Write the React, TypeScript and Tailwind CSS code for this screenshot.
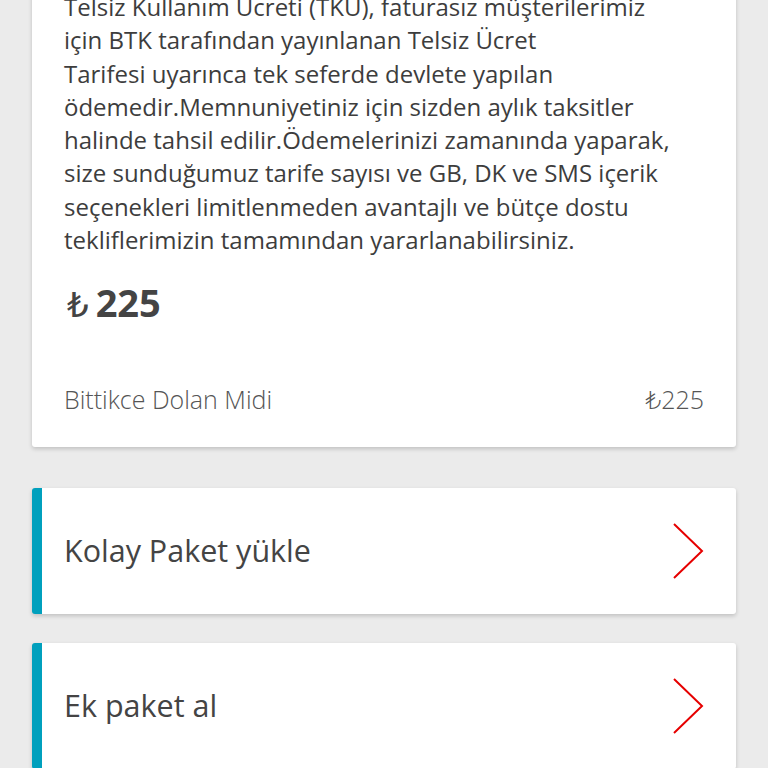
const font = { fontFamily: '"Open Sans", "DejaVu Sans", sans-serif' };

function Chevron() {
  return (
    <svg width="32" height="56" viewBox="0 0 32 56" fill="none" className="shrink-0">
      <path d="M2 1 L30 28 L2 55" stroke="#e60000" strokeWidth="2" />
    </svg>
  );
}

function LinkCard({ label }: { label: string }) {
  return (
    <div className="flex h-[126px] items-center rounded-[3px] bg-white border-l-[10px] border-[#00a0bd] pl-[22px] pr-[32px] shadow-[0_2px_4px_rgba(0,0,0,0.18)]">
      <span className="flex-1 text-[30.5px] text-[#444]">{label}</span>
      <Chevron />
    </div>
  );
}

const lines = [
  "Telsiz Kullanım Ücreti (TKÜ), faturasız müşterilerimiz",
  "için BTK tarafından yayınlanan Telsiz Ücret",
  "Tarifesi uyarınca tek seferde devlete yapılan",
  "ödemedir.Memnuniyetiniz için sizden aylık taksitler",
  "halinde tahsil edilir.Ödemelerinizi zamanında yaparak,",
  "size sunduğumuz tarife sayısı ve GB, DK ve SMS içerik",
  "seçenekleri limitlenmeden avantajlı ve bütçe dostu",
  "tekliflerimizin tamamından yararlanabilirsiniz.",
];

export default function App() {
  return (
    <div className="min-h-[768px] w-full overflow-hidden bg-[#ebebeb] px-[32px]" style={font}>
      <div className="-mt-[40px] rounded-[3px] bg-white px-[32px] pt-[30px] pb-[28px] shadow-[0_2px_4px_rgba(0,0,0,0.18)]">
        <p className="whitespace-nowrap text-[24px] leading-[33.3px] text-[#3d3d3d]">
          {lines.map((l) => (
            <span key={l} className="block">
              {l}
            </span>
          ))}
        </p>
        <div className="mt-[18px] ml-[3px] flex items-baseline gap-[7px] text-[#444]">
          <span className="text-[34px]">₺</span>
          <span className="text-[38px] font-bold">225</span>
        </div>
        <div className="mt-[50px] flex items-center justify-between text-[25px] font-light text-[#555]">
          <span>Bittikce Dolan Midi</span>
          <span>₺225</span>
        </div>
      </div>
      <div className="mt-[41px] flex flex-col gap-[29px]">
        <LinkCard label="Kolay Paket yükle" />
        <LinkCard label="Ek paket al" />
      </div>
    </div>
  );
}
